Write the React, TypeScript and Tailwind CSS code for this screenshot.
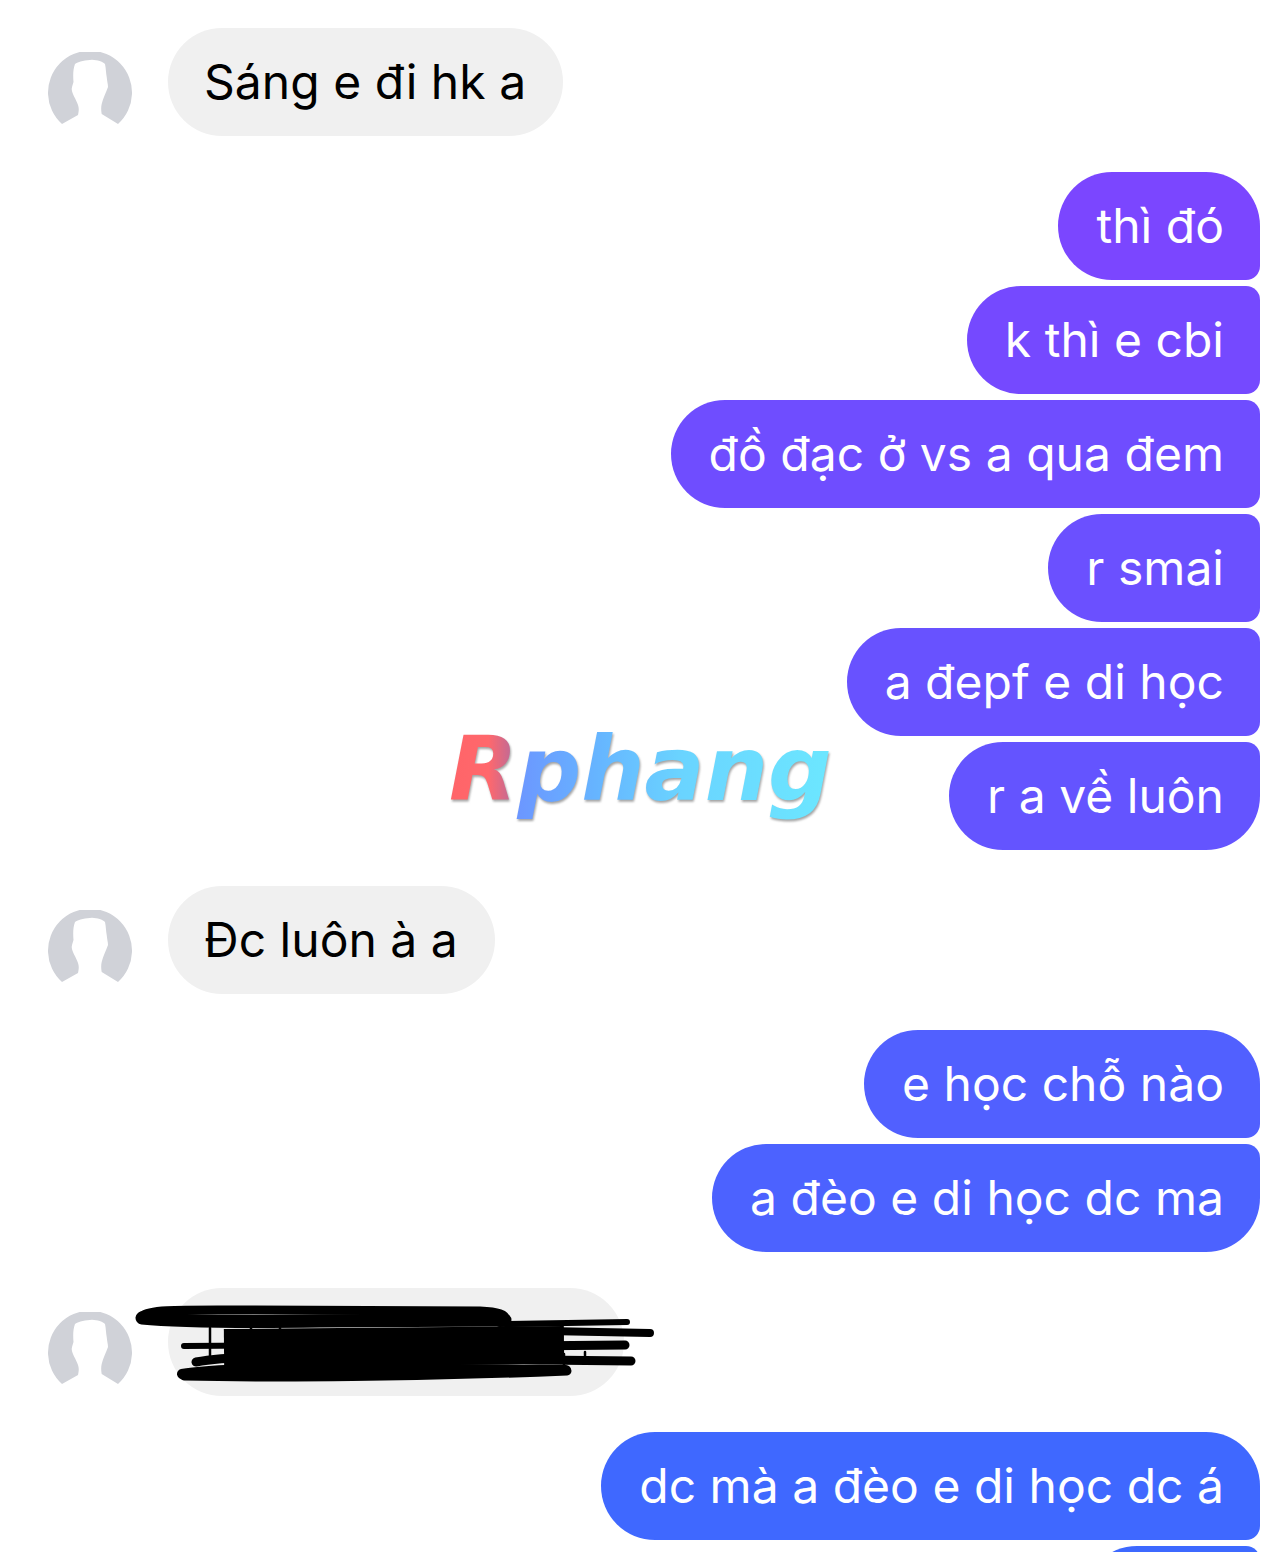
type Msg = {
  text: string;
  color: string;
  corners: string;
};

const FIRST = "rounded-l-[54px] rounded-tr-[54px] rounded-br-[14px]";
const MIDDLE = "rounded-l-[54px] rounded-r-[14px]";
const LAST = "rounded-l-[54px] rounded-tr-[14px] rounded-br-[54px]";

const GROUP_ONE: Msg[] = [
  { text: "thì đó", color: "bg-[#7b46ff]", corners: FIRST },
  { text: "k thì e cbi", color: "bg-[#7549ff]", corners: MIDDLE },
  { text: "đồ đạc ở vs a qua đem", color: "bg-[#6f4dff]", corners: MIDDLE },
  { text: "r smai", color: "bg-[#6b50ff]", corners: MIDDLE },
  { text: "a đepf e di học", color: "bg-[#6852ff]", corners: MIDDLE },
  { text: "r a về luôn", color: "bg-[#6454ff]", corners: LAST },
];

const GROUP_TWO: Msg[] = [
  { text: "e học chỗ nào", color: "bg-[#5160ff]", corners: FIRST },
  { text: "a đèo e di học dc ma", color: "bg-[#4c62ff]", corners: LAST },
];

function Avatar() {
  return (
    <svg width="84" height="84" viewBox="0 0 84 84" className="shrink-0 mt-6">
      <path
        fill="#d0d2d8"
        d="M14 72 L30 63 C31 58 31 56 30 53 C28 47 24 42 23.7 37 C24 34 25 32 25.5 30 C25 24 25 17 27 12 C31 9 38 8 44 7.7 C50 8 54 9 57 12 C58 17 58 21 58.7 25 C59 29 60 32 60 35 C58 41 55 46 53.7 52 C53 55 53 58 53.7 62 L70 72 A42 42 0 1 0 14 72 Z"
      />
    </svg>
  );
}

function Incoming({ text, width }: { text: string; width?: string }) {
  return (
    <div className="flex items-start gap-9 pl-12">
      <Avatar />
      <div className={`h-[108px] flex items-center pl-9 pr-[37px] rounded-[54px] bg-[#f0f0f0] text-black ${width ?? ""}`}>
        {text}
      </div>
    </div>
  );
}

function Outgoing({ msgs }: { msgs: Msg[] }) {
  return (
    <div className="flex flex-col items-end gap-1.5 pr-6">
      {msgs.map((m) => (
        <div key={m.text} className={`h-[108px] flex items-center pl-[38px] pr-9 text-white ${m.color} ${m.corners}`}>
          {m.text}
        </div>
      ))}
    </div>
  );
}

export default function App() {
  return (
    <div className="relative h-[1552px] w-[1284px] overflow-hidden bg-white pt-7 font-['Inter',sans-serif] text-[48px] leading-none tracking-[0.02px]">
      <div className="flex flex-col gap-9">
        <Incoming text="Sáng e đi hk a" />
        <Outgoing msgs={GROUP_ONE} />
        <Incoming text="Đc luôn à a" />
        <Outgoing msgs={GROUP_TWO} />
        <Incoming text="" width="w-[456px]" />
        <div className="flex flex-col items-end gap-1.5 pr-6">
          <div className={`h-[108px] flex items-center pl-[38px] pr-9 text-white bg-[#3f68ff] ${FIRST}`}>dc mà a đèo e di học dc á</div>
          <div className="h-[108px] w-[177px] rounded-l-[54px] rounded-tr-[14px] bg-[#3d69ff]" />
        </div>
      </div>

      {/* watermark */}
      <div className="absolute left-[445px] top-[710px] w-[395px] pl-1 font-['DejaVu_Sans',sans-serif] text-[89px] leading-[118px] font-bold italic tracking-normal text-transparent bg-clip-text bg-[linear-gradient(90deg,#ff6468_0%,#ff686c_11%,#c06a96_17%,#6c96ff_18%,#66b4ff_38%,#6ad4ff_60%,#6ce8ff_100%)] drop-shadow-[1px_2px_1px_rgba(90,90,90,0.55)]">
        Rphang
      </div>

      {/* scribble over the hidden message */}
      <svg className="absolute left-[120px] top-[1280px]" width="550" height="125" viewBox="0 0 550 125">
        <g fill="none" stroke="#000" strokeLinecap="round">
          <path strokeWidth="9" d="M22 36 C30 29 60 30 130 30 L360 31 C380 32 385 35 385 38" />
          <path strokeWidth="13" d="M22 38 C60 42 120 42 200 41 L385 40" />
          <path strokeWidth="6" d="M386 44 L507 42" />
          <path strokeWidth="8" d="M380 50 L530 53" />
          <path strokeWidth="6" d="M64 66 L200 65" />
          <path strokeWidth="9" d="M400 66 L505 65" />
          <path strokeWidth="38" strokeLinecap="butt" d="M104 68 L444 65" />
          <path strokeWidth="9" d="M76 82 C120 74 220 74 420 80 L511 81" />
          <path strokeWidth="10" d="M62 94 C100 86 250 88 446 90" />
          <path strokeWidth="9" d="M64 96 C150 98 300 97 447 91" />
          <path strokeWidth="2.5" d="M90 48 L90 76 M131 48 L131 56 M160 48 L160 53 M444 74 L444 90 M465 72 L465 80" />
        </g>
      </svg>
    </div>
  );
}
